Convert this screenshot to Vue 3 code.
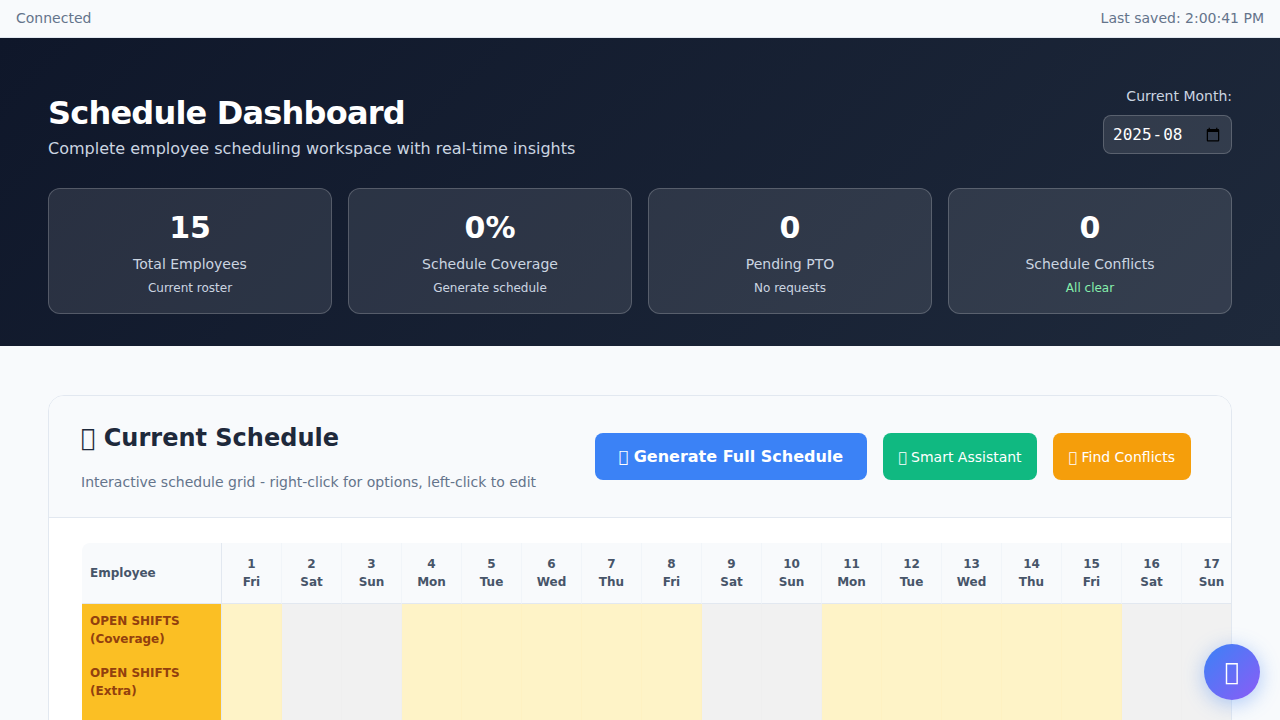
<template>
  <div class="page">
    <div class="status-bar">
      <span>Connected</span>
      <span>Last saved: 2:00:41 PM</span>
    </div>

    <header class="hero">
      <div class="hero-top">
        <div>
          <h1>Schedule Dashboard</h1>
          <p class="hero-sub">Complete employee scheduling workspace with real-time insights</p>
        </div>
        <div class="month-picker">
          <label for="month">Current Month:</label>
          <input id="month" type="month" value="2025-08" />
        </div>
      </div>
      <div class="stats">
        <div class="stat" v-for="stat in stats" :key="stat.label">
          <div class="stat-value">{{ stat.value }}</div>
          <div class="stat-label">{{ stat.label }}</div>
          <div class="stat-note" :class="{ good: stat.good }">{{ stat.note }}</div>
        </div>
      </div>
    </header>

    <main class="content">
      <section class="card">
        <div class="card-head">
          <div>
            <h2>&#xE000; Current Schedule</h2>
            <p>Interactive schedule grid - right-click for options, left-click to edit</p>
          </div>
          <div class="actions">
            <button class="btn btn-main">&#xE000; Generate Full Schedule</button>
            <button class="btn btn-green">&#xE000; Smart Assistant</button>
            <button class="btn btn-orange">&#xE000; Find Conflicts</button>
          </div>
        </div>
        <div class="table-wrap">
          <table class="grid">
            <thead>
              <tr>
                <th class="emp-col">Employee</th>
                <th v-for="d in days" :key="d.num">{{ d.num }}<br />{{ d.name }}</th>
              </tr>
            </thead>
            <tbody>
              <tr v-for="row in rows" :key="row.join()">
                <td class="emp-col open-name">{{ row[0] }}<br />{{ row[1] }}</td>
                <td v-for="d in days" :key="d.num" :class="d.weekend ? 'off' : 'open'"></td>
              </tr>
            </tbody>
          </table>
        </div>
      </section>
    </main>

    <button class="fab">&#xE000;</button>
  </div>
</template>

<script setup>
const stats = [
  { value: '15', label: 'Total Employees', note: 'Current roster' },
  { value: '0%', label: 'Schedule Coverage', note: 'Generate schedule' },
  { value: '0', label: 'Pending PTO', note: 'No requests' },
  { value: '0', label: 'Schedule Conflicts', note: 'All clear', good: true }
]

const names = ['Sun', 'Mon', 'Tue', 'Wed', 'Thu', 'Fri', 'Sat']
// August 2025 starts on a Friday, only the days that fit are shown
const days = []
for (let i = 1; i <= 17; i++) {
  const w = (i + 4) % 7
  days.push({ num: i, name: names[w], weekend: w === 0 || w === 6 })
}

const rows = [
  ['OPEN SHIFTS', '(Coverage)'],
  ['OPEN SHIFTS', '(Extra)'],
  ['', '']
]
</script>

<style>
html, body {
  margin: 0;
  background: #f8fafc;
}
</style>

<style scoped>
.page {
  font-family: "DejaVu Sans", sans-serif;
  background: #f8fafc;
  color: #1e293b;
}

.status-bar {
  display: flex;
  justify-content: space-between;
  align-items: flex-start;
  height: 37px;
  padding: 0 16px;
  font-size: 14px;
  line-height: 36px;
  color: #64748b;
  background: #f8fafc;
  border-bottom: 1px solid #e2e8f0;
}

.hero {
  background: linear-gradient(135deg, #0f172a 0%, #1e293b 100%);
  padding: 48px 48px 32px;
  color: #fff;
}

.hero-top {
  display: flex;
  justify-content: space-between;
  align-items: flex-start;
  margin-bottom: 31px;
}

h1 {
  margin: 0;
  font-size: 32px;
  line-height: 54px;
  font-weight: 700;
  letter-spacing: -0.025em;
}

.hero-sub {
  margin: 0;
  font-size: 16px;
  line-height: 17px;
  color: #cbd5e1;
}

.month-picker {
  display: flex;
  flex-direction: column;
  align-items: flex-end;
  gap: 11px;
  padding-top: 2px;
  font-size: 14px;
  color: #cbd5e1;
}

.month-picker input {
  width: 129px;
  height: 39px;
  box-sizing: border-box;
  padding: 8px;
  font-family: "DejaVu Sans Mono", monospace;
  font-size: 16px;
  color: #fff;
  background: rgba(255, 255, 255, 0.1);
  border: 1px solid rgba(255, 255, 255, 0.2);
  border-radius: 8px;
}

.stats {
  display: grid;
  grid-template-columns: repeat(4, 1fr);
  gap: 16px;
}

.stat {
  height: 126px;
  box-sizing: border-box;
  padding: 17px 16px;
  text-align: center;
  background: rgba(255, 255, 255, 0.1);
  border: 1px solid rgba(255, 255, 255, 0.2);
  border-radius: 12px;
}

.stat-value {
  font-size: 30px;
  font-weight: 700;
  line-height: 44px;
  margin-bottom: 4px;
}

.stat-label {
  font-size: 14px;
  line-height: 20px;
  color: #cbd5e1;
  margin-bottom: 4px;
}

.stat-note {
  font-size: 12px;
  line-height: 20px;
  color: #cbd5e1;
}

.stat-note.good {
  color: #86efac;
}

.content {
  padding: 49px 48px 48px;
}

.card {
  background: #fff;
  border: 1px solid #e2e8f0;
  border-radius: 16px;
  overflow: hidden;
}

.card-head {
  display: flex;
  justify-content: space-between;
  align-items: flex-start;
  height: 122px;
  box-sizing: border-box;
  padding: 22px 40px 0 32px;
  background: #f8fafc;
  border-bottom: 1px solid #e2e8f0;
}

h2 {
  margin: 0 0 16px;
  font-size: 24px;
  line-height: 40px;
  color: #1e293b;
}

.card-head p {
  margin: 0;
  font-size: 14px;
  line-height: 17px;
  color: #64748b;
}

.actions {
  display: flex;
  gap: 16px;
  margin-top: 15px;
}

.btn {
  height: 47px;
  padding: 0 16px;
  font-family: inherit;
  font-size: 14px;
  color: #fff;
  border: none;
  border-radius: 8px;
}

.btn-main {
  padding: 0 24px;
  font-size: 16px;
  font-weight: 700;
  background: #3b82f6;
}

.btn-green {
  padding: 0 15px;
  background: #10b981;
}

.btn-orange {
  background: #f59e0b;
}

.table-wrap {
  padding: 25px 0 0 33px;
  overflow: hidden;
}

.grid {
  border-collapse: separate;
  border-spacing: 0;
  table-layout: fixed;
  width: 1160px;
  font-size: 12px;
}

th {
  width: 60px;
  height: 61px;
  box-sizing: border-box;
  padding: 0;
  font-size: 12px;
  line-height: 18px;
  font-weight: 700;
  color: #475569;
  text-align: center;
  background: #f8fafc;
  border-right: 1px solid #f1f5f9;
  border-bottom: 1px solid #e2e8f0;
}

th.emp-col {
  width: 140px;
  padding-left: 8px;
  text-align: left;
  border-right: 1px solid #e2e8f0;
  border-top-left-radius: 8px;
}

td {
  height: 52px;
  box-sizing: border-box;
  padding: 0;
  border-right: 1px solid #f1f5f9;
}

td.emp-col {
  padding-left: 8px;
  line-height: 18px;
  font-weight: 700;
  color: #92400e;
  border-right: 1px solid #e2e8f0;
}

.open-name {
  background: #fbbf24;
}

td.open {
  background: #fef3c7;
  border-right-color: #fef1c2;
}

td.off {
  background: #f1f1f1;
  border-right-color: #efefef;
}

.fab {
  position: fixed;
  right: 20px;
  bottom: 20px;
  width: 56px;
  height: 56px;
  padding: 0;
  font-family: inherit;
  font-size: 24px;
  color: #fff;
  border: none;
  border-radius: 50%;
  background: linear-gradient(135deg, #3b82f6, #8b5cf6);
  box-shadow: 0 4px 20px rgba(59, 130, 246, 0.4);
}
</style>
